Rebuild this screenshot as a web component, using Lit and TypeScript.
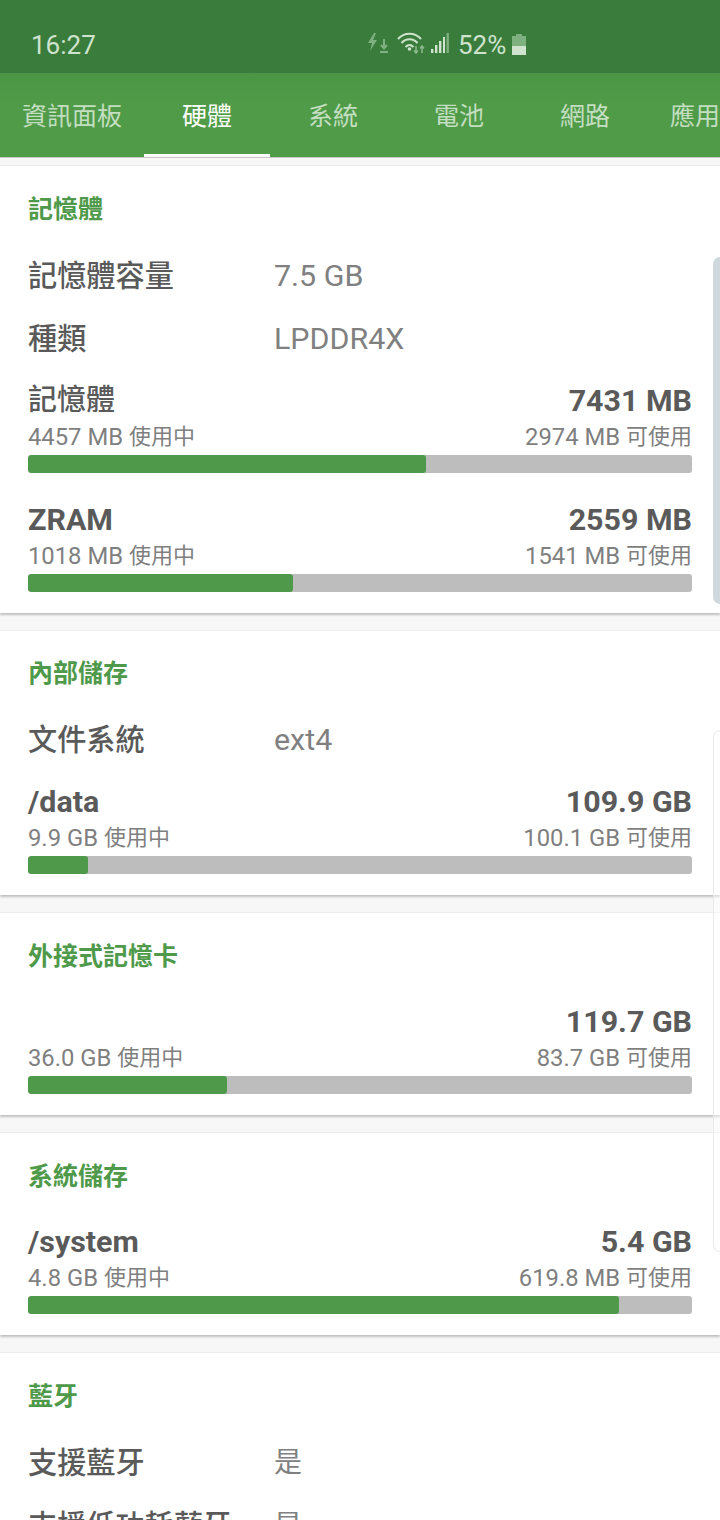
import { LitElement, html, css, svg } from "lit";
import { customElement } from "lit/decorators.js";

type Row = { k: string; v: string };
type Usage = { name: string; total: string; used: string; free: string; pct: number };
type Card = { title: string; cls: string; rows?: Row[]; usages?: Usage[] };

const CARDS: Card[] = [
  {
    title: "記憶體", cls: "c1",
    rows: [{ k: "記憶體容量", v: "7.5 GB" }, { k: "種類", v: "LPDDR4X" }],
    usages: [
      { name: "記憶體", total: "7431 MB", used: "4457 MB 使用中", free: "2974 MB 可使用", pct: 59.95 },
      { name: "ZRAM", total: "2559 MB", used: "1018 MB 使用中", free: "1541 MB 可使用", pct: 39.9 },
    ],
  },
  {
    title: "內部儲存", cls: "c2",
    rows: [{ k: "文件系統", v: "ext4" }],
    usages: [{ name: "/data", total: "109.9 GB", used: "9.9 GB 使用中", free: "100.1 GB 可使用", pct: 9 }],
  },
  {
    title: "外接式記憶卡", cls: "c3",
    usages: [{ name: "", total: "119.7 GB", used: "36.0 GB 使用中", free: "83.7 GB 可使用", pct: 30 }],
  },
  {
    title: "系統儲存", cls: "c4",
    usages: [{ name: "/system", total: "5.4 GB", used: "4.8 GB 使用中", free: "619.8 MB 可使用", pct: 89 }],
  },
  {
    title: "藍牙", cls: "c5",
    rows: [{ k: "支援藍牙", v: "是" }, { k: "支援低功耗藍牙", v: "是" }],
  },
];

const TABS = ["資訊面板", "硬體", "系統", "電池", "網路", "應用程式"];

/* The reference's Latin glyphs run a little wider than its CJK ones, so CJK runs get their own size. */
function mix(text: string) {
  return text
    .split(/([\u3000-\u9fff]+)/)
    .filter(Boolean)
    .map(p => (/[\u3000-\u9fff]/.test(p) ? html`<span class="cjk">${p}</span>` : p));
}

@customElement("app-root")
export class AppRoot extends LitElement {
  static styles = css`
    :host {
      display: block;
      width: 720px;
      height: 1520px;
      overflow: hidden;
      position: relative;
      background: #f7f7f7;
      font-family: Roboto, "Noto Sans CJK TC", sans-serif;
    }
    .status {
      height: 73px;
      background: #3a7c3b;
      display: flex;
      align-items: center;
      color: #cfe3cf;
      box-sizing: border-box;
      padding: 16px 0 0 31px;
      position: relative;
    }
    .time { font-size: 26px; line-height: 30px; }
    .sicons {
      position: absolute;
      left: 366px;
      top: 30px;
      display: flex;
      align-items: center;
      height: 28px;
    }
    .pct { font-size: 26px; line-height: 28px; margin-left: 7px; padding-top: 1px; }
    .tabs {
      height: 84px;
      background: linear-gradient(#4a9645, #4f9b48 40%);
      display: flex;
      overflow: hidden;
      border-bottom: 1px solid #c9c9c9;
    }
    .tab {
      flex: none;
      min-width: 126px;
      box-sizing: border-box;
      padding: 0 22px;
      height: 84px;
      font-size: 25px;
      line-height: 88px;
      text-align: center;
      color: #c4dec1;
      white-space: nowrap;
      position: relative;
    }
    .tab.on { color: #fff; }
    .tab.on::after {
      content: "";
      position: absolute;
      left: 0; right: 0; bottom: 0;
      height: 3px;
      background: #fff;
    }
    .list { padding-top: 7px; display: flex; flex-direction: column; gap: 17px; }
    .card {
      background: #fff;
      border-top: 1px solid #ececec;
      box-shadow: 0 2px 2px rgba(0,0,0,0.22);
      padding: 0 28px;
      box-sizing: border-box;
    }
    .title {
      color: #4f9a4a;
      font-size: 25px;
      font-weight: 700;
      line-height: 36px;
      padding-top: 26px;
    }
    .c2 .title { padding-top: 25px; }
    .rows { padding-top: 16px; }
    .row { display: flex; height: 63px; align-items: center; }
    .k { width: 246px; flex: none; font-size: 29.2px; font-weight: 500; color: #5a5a5a; white-space: nowrap; line-height: 40px; padding-top: 1px; }
    .v { font-size: 30.4px; color: #808080; white-space: nowrap; line-height: 40px; }
    .v .cjk { font-size: 28px; }
    .cjk { vertical-align: 1px; }
    .usages { display: flex; flex-direction: column; gap: 26px; padding-top: 10px; }
    .usages.notop { padding-top: 26px; }
    .usage { display: flex; flex-direction: column; }
    .top, .sub { display: flex; justify-content: space-between; white-space: nowrap; }
    .top { font-size: 30.4px; font-weight: 700; color: #5a5a5a; line-height: 41px; height: 41px; }
    .top .cjk { font-size: 29px; font-weight: 500; }
    .sub { font-size: 23.8px; color: #7f7f7f; line-height: 32px; height: 32px; }
    .sub .cjk { font-size: 22px; }
    .bar { height: 18px; background: #bdbdbd; border-radius: 3px; overflow: hidden; margin-top: 2px; }
    .fill { height: 100%; background: #4f9a4a; border-radius: 3px; }
    .c1 { height: 448px; }
    .c2 { height: 265px; }
    .c3 { height: 203px; }
    .c4 { height: 203px; }
    .c5 { height: 180px; }
    .scroll {
      position: absolute;
      right: 0;
      width: 7px;
      box-sizing: border-box;
      border-radius: 7px 0 0 7px;
    }
    .s1 { top: 257px; height: 347px; background: #cfd8dc; }
    .s2 {
      top: 730px;
      height: 522px;
      background: rgba(255, 255, 255, 0.45);
      border: 1px solid #e8eaeb;
      border-right: 0;
    }
  `;

  private icons() {
    return svg`<svg width="85" height="28" viewBox="0 0 85 28" fill="none">
      <path d="M8 3 L2 13 H6 L4 21 L11 10 H7 L10 3 Z" fill="#7fb07f"/>
      <path d="M18 9 V18 M15 15 L18 18.5 L21 15 M14 22 H22" stroke="#7fb07f" stroke-width="2"/>
      <g stroke="#cfe3cf" stroke-width="2" fill="none">
        <path d="M32 9 C38 2 49 2 55 9"/>
        <path d="M35.5 13 C40 8 47 8 51.5 13"/>
        <path d="M39.5 17 C42 14.5 45 14.5 47.5 17"/>
      </g>
      <circle cx="43.5" cy="19" r="1.8" fill="#cfe3cf"/>
      <path d="M50 16 V23 M48 20.5 L50 23 L52 20.5" stroke="#8cb98c" stroke-width="1.5"/>
      <path d="M56 23 V16 M54 18.5 L56 16 L58 18.5" stroke="#8cb98c" stroke-width="1.5"/>
      <g fill="#cfe3cf">
        <rect x="65" y="19" width="2.4" height="4"/>
        <rect x="69" y="15" width="2.4" height="8"/>
        <rect x="73" y="11" width="2.4" height="12"/>
        <rect x="77" y="7" width="2" height="16"/>
      </g>
      <rect x="80.5" y="3" width="2.4" height="20" fill="#7fb07f"/>
    </svg>`;
  }

  private battery() {
    return svg`<svg width="14" height="21" viewBox="0 0 14 21" style="margin-left:6px">
      <rect x="4" y="0" width="6" height="3" fill="#7fb07f"/>
      <rect x="0" y="2" width="14" height="10" fill="#7fb07f"/>
      <rect x="0" y="12" width="14" height="9" fill="#cfe3cf"/>
    </svg>`;
  }

  private usage(u: Usage) {
    return html`<div class="usage">
      <div class="top"><span>${mix(u.name)}</span><span>${u.total}</span></div>
      <div class="sub"><span>${mix(u.used)}</span><span>${mix(u.free)}</span></div>
      <div class="bar"><div class="fill" style="width:${u.pct}%"></div></div>
    </div>`;
  }

  render() {
    return html`
      <div class="status">
        <span class="time">16:27</span>
        <div class="sicons">${this.icons()}<span class="pct">52%</span>${this.battery()}</div>
      </div>
      <div class="tabs">
        ${TABS.map((t, i) => html`<div class="tab ${i === 1 ? "on" : ""}">${t}</div>`)}
      </div>
      <div class="list">
        ${CARDS.map(c => html`<section class="card ${c.cls}">
          <div class="title">${c.title}</div>
          ${c.rows
            ? html`<div class="rows">
                ${c.rows.map(r => html`<div class="row"><div class="k">${r.k}</div><div class="v">${mix(r.v)}</div></div>`)}
              </div>`
            : ""}
          ${c.usages
            ? html`<div class="usages ${c.rows ? "" : "notop"}">${c.usages.map(u => this.usage(u))}</div>`
            : ""}
        </section>`)}
      </div>
      <div class="scroll s1"></div>
      <div class="scroll s2"></div>
    `;
  }
}
